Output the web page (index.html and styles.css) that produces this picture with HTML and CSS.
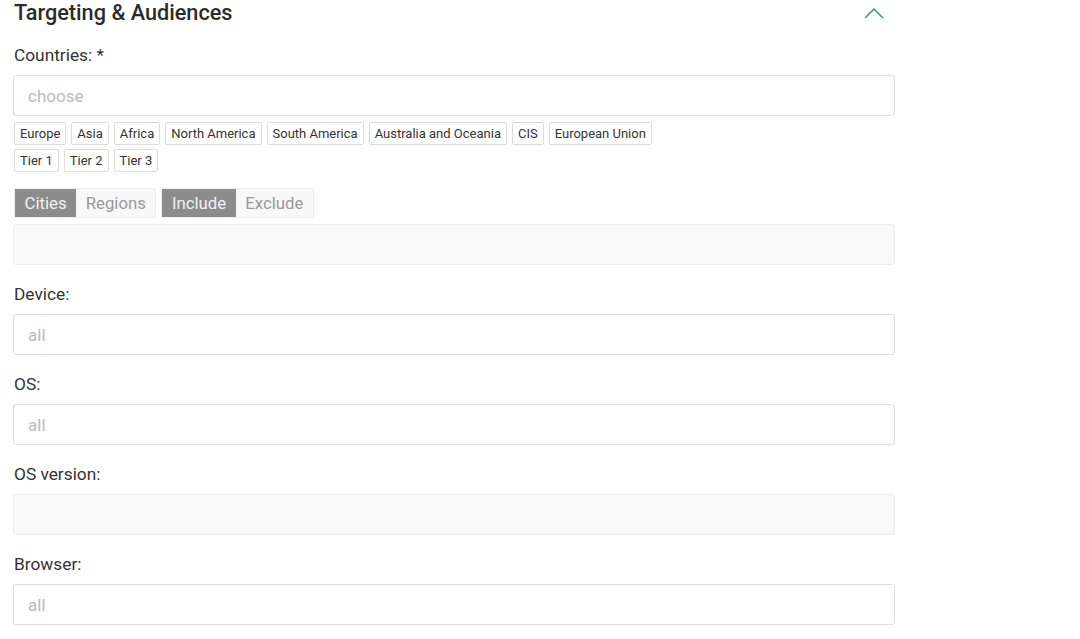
FILE: index.html
```html
<!DOCTYPE html>
<html lang="en">
<head>
  <meta charset="UTF-8">
  <meta name="viewport" content="width=device-width, initial-scale=1.0">
  <title>Targeting &amp; Audiences</title>
  <link rel="stylesheet" href="styles.css">
</head>
<body>
  <div class="panel">
    <div class="panel-head">
      <h2>Targeting &amp; Audiences</h2>
      <svg class="chevron" xmlns="http://www.w3.org/2000/svg" width="20" height="12" viewBox="0 0 20 12" fill="none" stroke="currentColor" stroke-width="1.6" stroke-linecap="round" stroke-linejoin="round">
        <polyline points="1.5 10.5 10 2 18.5 10.5"></polyline>
      </svg>
    </div>

    <div class="field">
      <label>Countries: *</label>
      <div class="input"><span class="placeholder">choose</span></div>
      <div class="tags">
        <span class="tag">Europe</span>
        <span class="tag">Asia</span>
        <span class="tag">Africa</span>
        <span class="tag">North America</span>
        <span class="tag">South America</span>
        <span class="tag">Australia and Oceania</span>
        <span class="tag">CIS</span>
        <span class="tag">European Union</span>
      </div>
      <div class="tags">
        <span class="tag">Tier 1</span>
        <span class="tag">Tier 2</span>
        <span class="tag">Tier 3</span>
      </div>
      <div class="toggles">
        <div class="toggle-group">
          <span class="toggle active">Cities</span>
          <span class="toggle">Regions</span>
        </div>
        <div class="toggle-group">
          <span class="toggle active">Include</span>
          <span class="toggle">Exclude</span>
        </div>
      </div>
      <div class="input disabled"></div>
    </div>

    <div class="field">
      <label>Device:</label>
      <div class="input"><span class="placeholder">all</span></div>
    </div>

    <div class="field">
      <label>OS:</label>
      <div class="input"><span class="placeholder">all</span></div>
    </div>

    <div class="field">
      <label>OS version:</label>
      <div class="input disabled"></div>
    </div>

    <div class="field">
      <label>Browser:</label>
      <div class="input"><span class="placeholder">all</span></div>
    </div>
  </div>
</body>
</html>
```

FILE: styles.css
```css
:root {
  --text: #333;
  --muted: #bbb;
  --border: #ddd;
  --green: #3b9b7b;
  --radius: 3px;
}

* {
  margin: 0;
  padding: 0;
  box-sizing: border-box;
}

body {
  font-family: Roboto, 'Liberation Sans', sans-serif;
  color: var(--text);
  background-color: white;
}

.panel {
  width: 895px;
  padding-left: 13px;
}

.panel-head {
  display: flex;
  align-items: center;
  justify-content: space-between;
  height: 26px;
  margin-bottom: 17px;
  padding-left: 1px;
  padding-right: 11px;
}

h2 {
  font-size: 21.7px;
  font-weight: 500;
  line-height: 26px;
  color: #2b2b2b;
}

.chevron {
  color: var(--green);
}

.field {
  margin-bottom: 17px;
}

label {
  display: block;
  font-size: 17.3px;
  line-height: 24px;
  margin-bottom: 8px;
  padding-left: 1px;
  color: var(--text);
}

.input {
  height: 41px;
  border: 1px solid var(--border);
  border-radius: var(--radius);
  padding: 0 14px;
  display: flex;
  align-items: center;
  background-color: white;
}

.input.disabled {
  background-color: #f9f9f9;
  border-color: #eee;
}

.placeholder {
  font-size: 17px;
  color: var(--muted);
}

.tags {
  display: flex;
  gap: 5px;
  margin-top: 6px;
  padding-left: 1px;
}

.tags + .tags {
  margin-top: 4px;
}

.tag {
  height: 23px;
  line-height: 21px;
  padding: 0 5px;
  font-size: 13px;
  border: 1px solid var(--border);
  border-radius: 2px;
  color: var(--text);
}

.toggles {
  display: flex;
  gap: 5px;
  margin-top: 16px;
  margin-bottom: 6px;
  padding-left: 1px;
}

.toggle-group {
  display: flex;
  border: 1px solid #eee;
  border-radius: 2px;
  background-color: #f8f8f8;
}

.toggle {
  height: 28px;
  line-height: 28px;
  padding: 0 9.5px;
  font-size: 16.8px;
  color: #999;
}

.toggle.active {
  background-color: #8c8c8c;
  color: #f2f2f2;
}
```
